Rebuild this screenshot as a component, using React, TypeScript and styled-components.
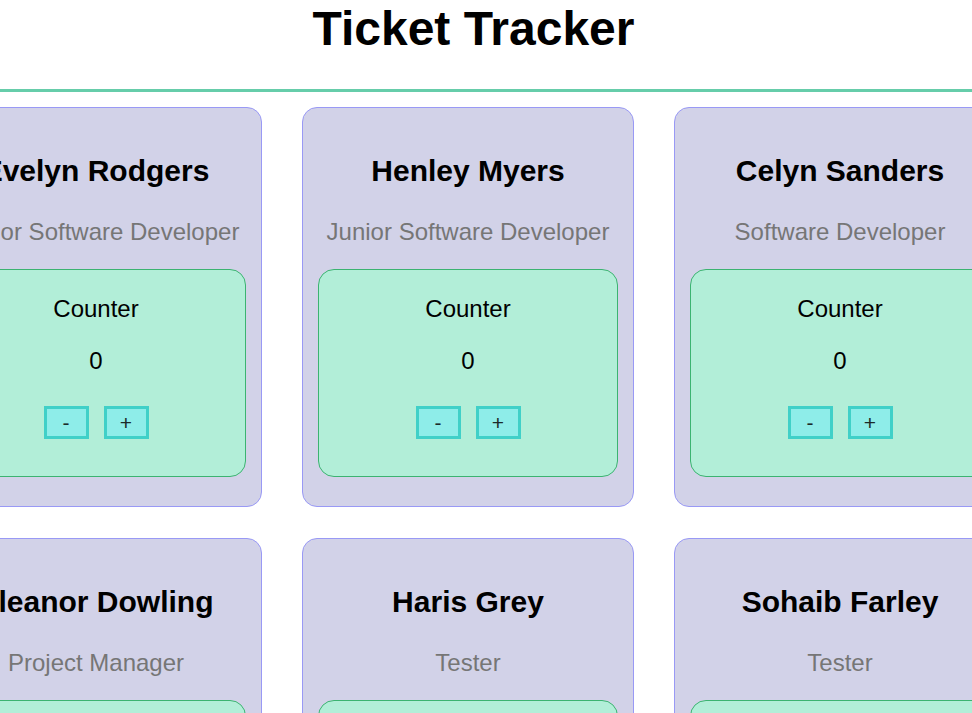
import React, { useState } from "react";
import styled, { createGlobalStyle } from "styled-components";

const GlobalStyle = createGlobalStyle`
  html, body {
    margin: 0;
    padding: 0;
    background: #ffffff;
    font-family: "Liberation Sans", Arial, sans-serif;
    overflow: hidden;
  }
`;

const Page = styled.div`
  width: 972px;
  display: flex;
  flex-direction: column;
`;

const Header = styled.header`
  box-sizing: border-box;
  height: 92px;
  border-bottom: 3px solid #66cdaa;
  padding: 1px 25px 0 0;
`;

const Title = styled.h1`
  margin: 0;
  font-size: 48px;
  line-height: 55px;
  font-weight: bold;
  text-align: center;
  color: #000;
`;

const Grid = styled.main`
  display: grid;
  grid-template-columns: repeat(3, 331.5px);
  column-gap: 40.5px;
  row-gap: 31px;
  justify-content: center;
  padding: 15px 36px 0 0;
`;

const Card = styled.section`
  box-sizing: border-box;
  width: 331.5px;
  padding: 0 15px;
  background: #d2d2e8;
  border: 1px solid #9999f5;
  border-radius: 15px;
  display: flex;
  flex-direction: column;
  align-items: stretch;
  text-align: center;
`;

const Name = styled.h2`
  margin: 45px 0 0;
  font-size: 30px;
  line-height: 35px;
  font-weight: bold;
  color: #000;
  white-space: nowrap;
`;

const Role = styled.p`
  margin: 30px 0 0;
  font-size: 24px;
  line-height: 28px;
  color: #767676;
  white-space: nowrap;
`;

const CounterBox = styled.div`
  margin: 23px 0 29px;
  padding: 25px 0 37px;
  background: #b2eed8;
  border: 1px solid #3cb371;
  border-radius: 16px;
  display: flex;
  flex-direction: column;
  align-items: center;
`;

const CounterLabel = styled.div`
  font-size: 24px;
  line-height: 28px;
  color: #000;
`;

const CounterValue = styled.div`
  margin-top: 24px;
  font-size: 24px;
  line-height: 28px;
  color: #000;
`;

const Buttons = styled.div`
  margin-top: 31px;
  display: flex;
  gap: 15px;
  justify-content: center;
`;

const StepButton = styled.button`
  box-sizing: border-box;
  width: 45px;
  height: 33px;
  padding: 0;
  background: #8eede9;
  border: 3px solid #40d0c8;
  border-radius: 0;
  font-family: "Liberation Sans", Arial, sans-serif;
  font-size: 21px;
  line-height: 1;
  color: #1c2a2a;
  cursor: pointer;
`;

type Person = { name: string; role: string };

const people: Person[] = [
  { name: "Evelyn Rodgers", role: "Senior Software Developer" },
  { name: "Henley Myers", role: "Junior Software Developer" },
  { name: "Celyn Sanders", role: "Software Developer" },
  { name: "Eleanor Dowling", role: "Project Manager" },
  { name: "Haris Grey", role: "Tester" },
  { name: "Sohaib Farley", role: "Tester" },
];

function Counter() {
  const [count, setCount] = useState(0);
  return (
    <CounterBox>
      <CounterLabel>Counter</CounterLabel>
      <CounterValue>{count}</CounterValue>
      <Buttons>
        <StepButton onClick={() => setCount((c) => c - 1)}>-</StepButton>
        <StepButton onClick={() => setCount((c) => c + 1)}>+</StepButton>
      </Buttons>
    </CounterBox>
  );
}

export default function App() {
  return (
    <Page>
      <GlobalStyle />
      <Header>
        <Title>Ticket Tracker</Title>
      </Header>
      <Grid>
        {people.map((p) => (
          <Card key={p.name}>
            <Name>{p.name}</Name>
            <Role>{p.role}</Role>
            <Counter />
          </Card>
        ))}
      </Grid>
    </Page>
  );
}
